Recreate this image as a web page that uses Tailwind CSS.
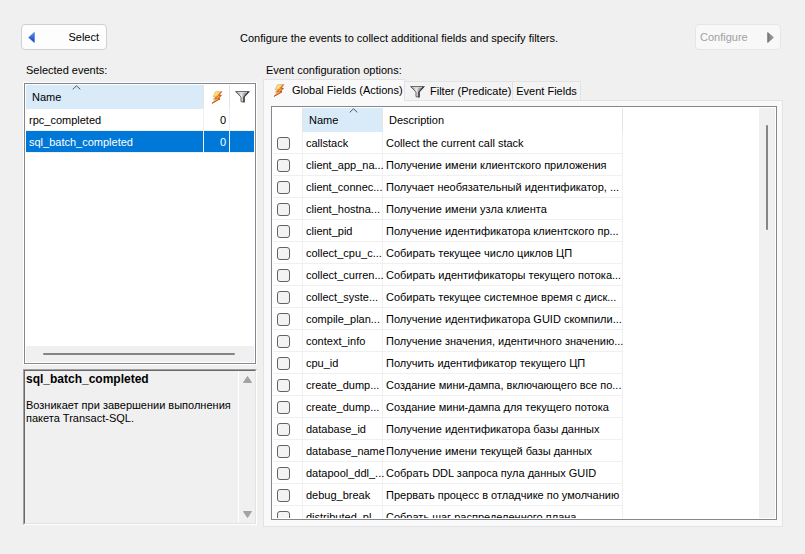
<!DOCTYPE html>
<html lang="en">
<head>
<meta charset="utf-8">
<title>Configure events</title>
<script src="https://cdn.jsdelivr.net/npm/@tailwindcss/browser@4"></script>
</head>
<body class="bg-[#f0f0f0] font-['Liberation_Sans',Arial,sans-serif] text-[11px] leading-[13px] text-black">
<svg class="absolute size-0" aria-hidden="true">
  <defs>
    <linearGradient id="gold" x1="0" y1="0" x2="1" y2="1"><stop offset="0" stop-color="#ffe45c"/><stop offset="1" stop-color="#e8862c"/></linearGradient>
    <linearGradient id="steel" x1="0" y1="0" x2="1" y2="0"><stop offset="0" stop-color="#555"/><stop offset=".4" stop-color="#eee"/><stop offset="1" stop-color="#333"/></linearGradient>
    <linearGradient id="blue" x1="0" y1="0" x2="0" y2="1"><stop offset="0" stop-color="#5b9cf5"/><stop offset="1" stop-color="#0b35c4"/></linearGradient>
    <linearGradient id="gray" x1="0" y1="0" x2="1" y2="0"><stop offset="0" stop-color="#777"/><stop offset="1" stop-color="#aaa"/></linearGradient>
    <symbol id="bolt" viewBox="0 0 12 13">
      <path d="M4.5 .8 10.7.5 7.6 4.2 10.3 4.3 7 7.7 9 7.8 1 12.4 4.1 8.4 2.2 8.2 4.6 5.6 2.2 5.5Z" fill="url(#gold)" stroke="#c49a60" stroke-width=".5"/>
      <path d="M10.7.6 7.6 4.2 10.3 4.3 7 7.7 9 7.8 1 12.4" fill="none" stroke="#cf4a2a" stroke-width="1"/>
      <path d="M7.2 5 4 7.4H6" fill="none" stroke="#d9502a" stroke-width=".8"/>
      <path d="M5 1.4h3.8L4.6 4.8H3z" fill="#ffe879"/>
    </symbol>
    <symbol id="funnel" viewBox="0 0 15 12">
      <path d="M.6.6H14.4L9.3 6.1V11.3L6 10.6V6.1Z" fill="url(#steel)" stroke="#555" stroke-width=".9"/>
      <path d="M2.5 1.6H12" stroke="#ddd" stroke-width=".8"/>
      <path d="M13.4 1 8.9 5.8V10.9" fill="none" stroke="#222" stroke-width="1"/>
    </symbol>
    <symbol id="caret" viewBox="0 0 9 5"><path d="M.7 4.4 4.5.8 8.3 4.4" fill="none" stroke="#555" stroke-width="1"/></symbol>
  </defs>
</svg>
<main class="flex h-screen flex-col pt-6 pr-[22px] pb-[27px] pl-[23px]">
  <header class="-ml-0.5 flex shrink-0 items-center justify-between">
    <button class="flex h-[26px] w-[86px] items-center justify-between rounded border border-[#d0d0d0] bg-[#fdfdfd] pr-[7px] pl-1.5">
      <svg class="h-[11px] w-[7px]" viewBox="0 0 7 11"><path d="M6.3.5V10.5L.7 5.5Z" fill="url(#blue)" stroke="#2455c8" stroke-width=".6"/></svg>
      <span>Select</span>
    </button>
    <p class="pr-1 pt-0.5">Configure the events to collect additional fields and specify filters.</p>
    <button disabled class="mr-0.5 flex h-[26px] w-[86px] items-center justify-between rounded border border-[#e5e5e5] bg-[#f8f8f8] pr-1.5 pl-1 text-[#a0a0a0]">
      <span>Configure</span>
      <svg class="h-[11px] w-[7px]" viewBox="0 0 7 11"><path d="M.7.5V10.5L6.3 5.5Z" fill="url(#gray)" stroke="#666" stroke-width=".7"/></svg>
    </button>
  </header>

  <div class="flex min-h-0 flex-1 gap-1.5 pt-[13px]">
    <section class="flex w-[234px] shrink-0 flex-col pb-0.5">
      <h2 id="selected" class="h-[19px] pt-px pl-[3px]">Selected events:</h2>
      <div class="flex min-h-0 flex-[281] flex-col border border-white">
        <div class="flex min-h-0 flex-1 flex-col border border-[#828790] bg-white p-px">
          <table aria-labelledby="selected" class="w-full table-fixed border-separate border-spacing-0 [&_tbody_td]:border-b [&_tbody_td]:border-[#f0f0f0] [&_tbody_td]:pt-px">
            <thead>
              <tr class="h-6">
                <th class="relative border-r border-[#e5e5e5] bg-[#d9ebf9] p-0 pl-1.5 text-left font-normal">Name
                  <svg class="absolute top-0 left-[46px] h-[5px] w-[9px]"><use href="#caret"/></svg></th>
                <th class="w-[26px] border-r border-[#e5e5e5] p-0" aria-label="Actions"><svg class="mx-auto h-[13px] w-3"><use href="#bolt"/></svg></th>
                <th class="w-6 p-0" aria-label="Filter"><svg class="mx-auto h-3 w-[15px]"><use href="#funnel"/></svg></th>
              </tr>
            </thead>
            <tbody>
              <tr class="h-[22px]"><td class="border-r p-0 pl-[3px]">rpc_completed</td><td class="border-r p-0 pr-[3px] text-right">0</td><td class="p-0"></td></tr>
              <tr class="h-[22px] bg-[#0078d7] text-white"><td class="border-r p-0 pl-[3px]">sql_batch_completed</td><td class="border-r p-0 pr-[3px] text-right">0</td><td class="p-0"></td></tr>
            </tbody>
          </table>
          <div class="mt-auto flex h-4 items-center bg-[#f0f0f0] pr-[19px] pl-[17px]"><div class="h-0.5 flex-1 rounded bg-[#858585]"></div></div>
        </div>
      </div>
      <div class="mt-1 flex min-h-0 flex-[154] flex-col border border-t-[#a0a0a0] border-r-white border-b-white border-l-[#a0a0a0]">
        <div class="flex min-h-0 flex-1 border border-t-[#696969] border-r-[#e3e3e3] border-b-[#e3e3e3] border-l-[#696969]">
          <div class="min-w-0 flex-1 pt-0.5 pl-px">
            <h3 class="text-[12px] font-bold">sql_batch_completed</h3>
            <p class="pt-[13px]">Возникает при завершении выполнения<br>пакета Transact-SQL.</p>
          </div>
          <div class="flex w-[17px] shrink-0 flex-col items-center justify-between border-l border-white py-[5px]">
            <svg class="h-[7px] w-[9px]" viewBox="0 0 9 7"><path d="M4.5.5 8.5 6.5H.5Z" fill="#a3a3a3" stroke="#a3a3a3" stroke-linejoin="round"/></svg>
            <svg class="h-[7px] w-[9px]" viewBox="0 0 9 7"><path d="M4.5 6.5 8.5.5H.5Z" fill="#a3a3a3" stroke="#a3a3a3" stroke-linejoin="round"/></svg>
          </div>
        </div>
      </div>
    </section>

    <section class="flex min-w-0 flex-1 flex-col">
      <h2 class="h-4 pt-px pl-[3px]">Event configuration options:</h2>
      <div role="tablist" class="relative flex h-[22px] items-end">
        <button role="tab" aria-selected="true" class="flex h-[22px] w-[142px] items-center gap-[7px] border border-b-0 border-[#e3e3e3] bg-[#f9f9f9] pl-[9px] text-left whitespace-nowrap"><svg class="h-[13px] w-3"><use href="#bolt"/></svg>Global Fields (Actions)</button>
        <button role="tab" aria-selected="false" class="flex h-5 w-[108px] items-center gap-[5px] border border-l-0 border-[#e3e3e3] bg-[#f3f3f3] pt-px pl-[5px] text-left whitespace-nowrap"><svg class="h-3 w-[15px]"><use href="#funnel"/></svg>Filter (Predicate)</button>
        <button role="tab" aria-selected="false" class="h-5 w-[68px] border border-l-0 border-[#e3e3e3] bg-[#f3f3f3] pt-px text-center whitespace-nowrap">Event Fields</button>
      </div>
      <div role="tabpanel" class="-mt-px flex min-h-0 flex-1 flex-col border border-[#e3e3e3] bg-[#f9f9f9] pt-[5px] pr-[5px] pb-1.5 pl-[7px]">
        <div class="flex min-h-0 flex-1 justify-between border border-[#828790] bg-white p-px">
          <div class="h-full overflow-hidden">
            <table class="w-[350px] table-fixed border-separate border-spacing-0 whitespace-nowrap [&_tbody_td]:h-[22px] [&_tbody_td]:border-r [&_tbody_td]:border-b [&_tbody_td]:border-[#f0f0f0] [&_tbody_td]:pt-px">
              <thead>
                <tr class="h-6 text-left">
                  <th class="w-[30px] border-r border-[#e5e5e5] p-0" aria-label="Enabled"></th>
                  <th class="relative w-20 border-r border-[#e5e5e5] bg-[#d9ebf9] p-0 pl-1.5 font-normal">Name
                    <svg class="absolute top-0 left-[46px] h-[5px] w-[9px]"><use href="#caret"/></svg></th>
                  <th class="w-60 border-r border-[#e5e5e5] p-0 pl-1.5 font-normal">Description</th>
                </tr>
              </thead>
              <tbody id="rows"></tbody>
            </table>
          </div>
          <div class="w-4 bg-[#f0f0f0] pt-[17px]"><div class="mx-auto h-[105px] w-0.5 rounded bg-[#858585]"></div></div>
        </div>
      </div>
    </section>
  </div>
</main>
<script>
const fields = [
  ["callstack", "Collect the current call stack"],
  ["client_app_na...", "Получение имени клиентского приложения"],
  ["client_connec...", "Получает необязательный идентификатор, ..."],
  ["client_hostna...", "Получение имени узла клиента"],
  ["client_pid", "Получение идентификатора клиентского пр..."],
  ["collect_cpu_c...", "Собирать текущее число циклов ЦП"],
  ["collect_curren...", "Собирать идентификаторы текущего потока..."],
  ["collect_syste...", "Собирать текущее системное время с диск..."],
  ["compile_plan...", "Получение идентификатора GUID скомпили..."],
  ["context_info", "Получение значения, идентичного значению..."],
  ["cpu_id", "Получить идентификатор текущего ЦП"],
  ["create_dump...", "Создание мини-дампа, включающего все по..."],
  ["create_dump...", "Создание мини-дампа для текущего потока"],
  ["database_id", "Получение идентификатора базы данных"],
  ["database_name", "Получение имени текущей базы данных"],
  ["datapool_ddl_...", "Собрать DDL запроса пула данных GUID"],
  ["debug_break", "Прервать процесс в отладчике по умолчанию"],
  ["distributed_pl...", "Собрать шаг распределенного плана"]
];
document.getElementById("rows").innerHTML = fields.map(([name, text], i) =>
  `<tr><td class="p-0 pl-1"><input id="f${i}" type="checkbox" class="block size-[13px] appearance-none rounded-[3px] border border-[#626262] bg-[#f3f3f3] checked:bg-[#0078d7]"></td><td class="p-0 pl-[3px]"><label for="f${i}">${name}</label></td><td class="p-0 pl-[3px]">${text}</td></tr>`).join("");
</script>
</body>
</html>
